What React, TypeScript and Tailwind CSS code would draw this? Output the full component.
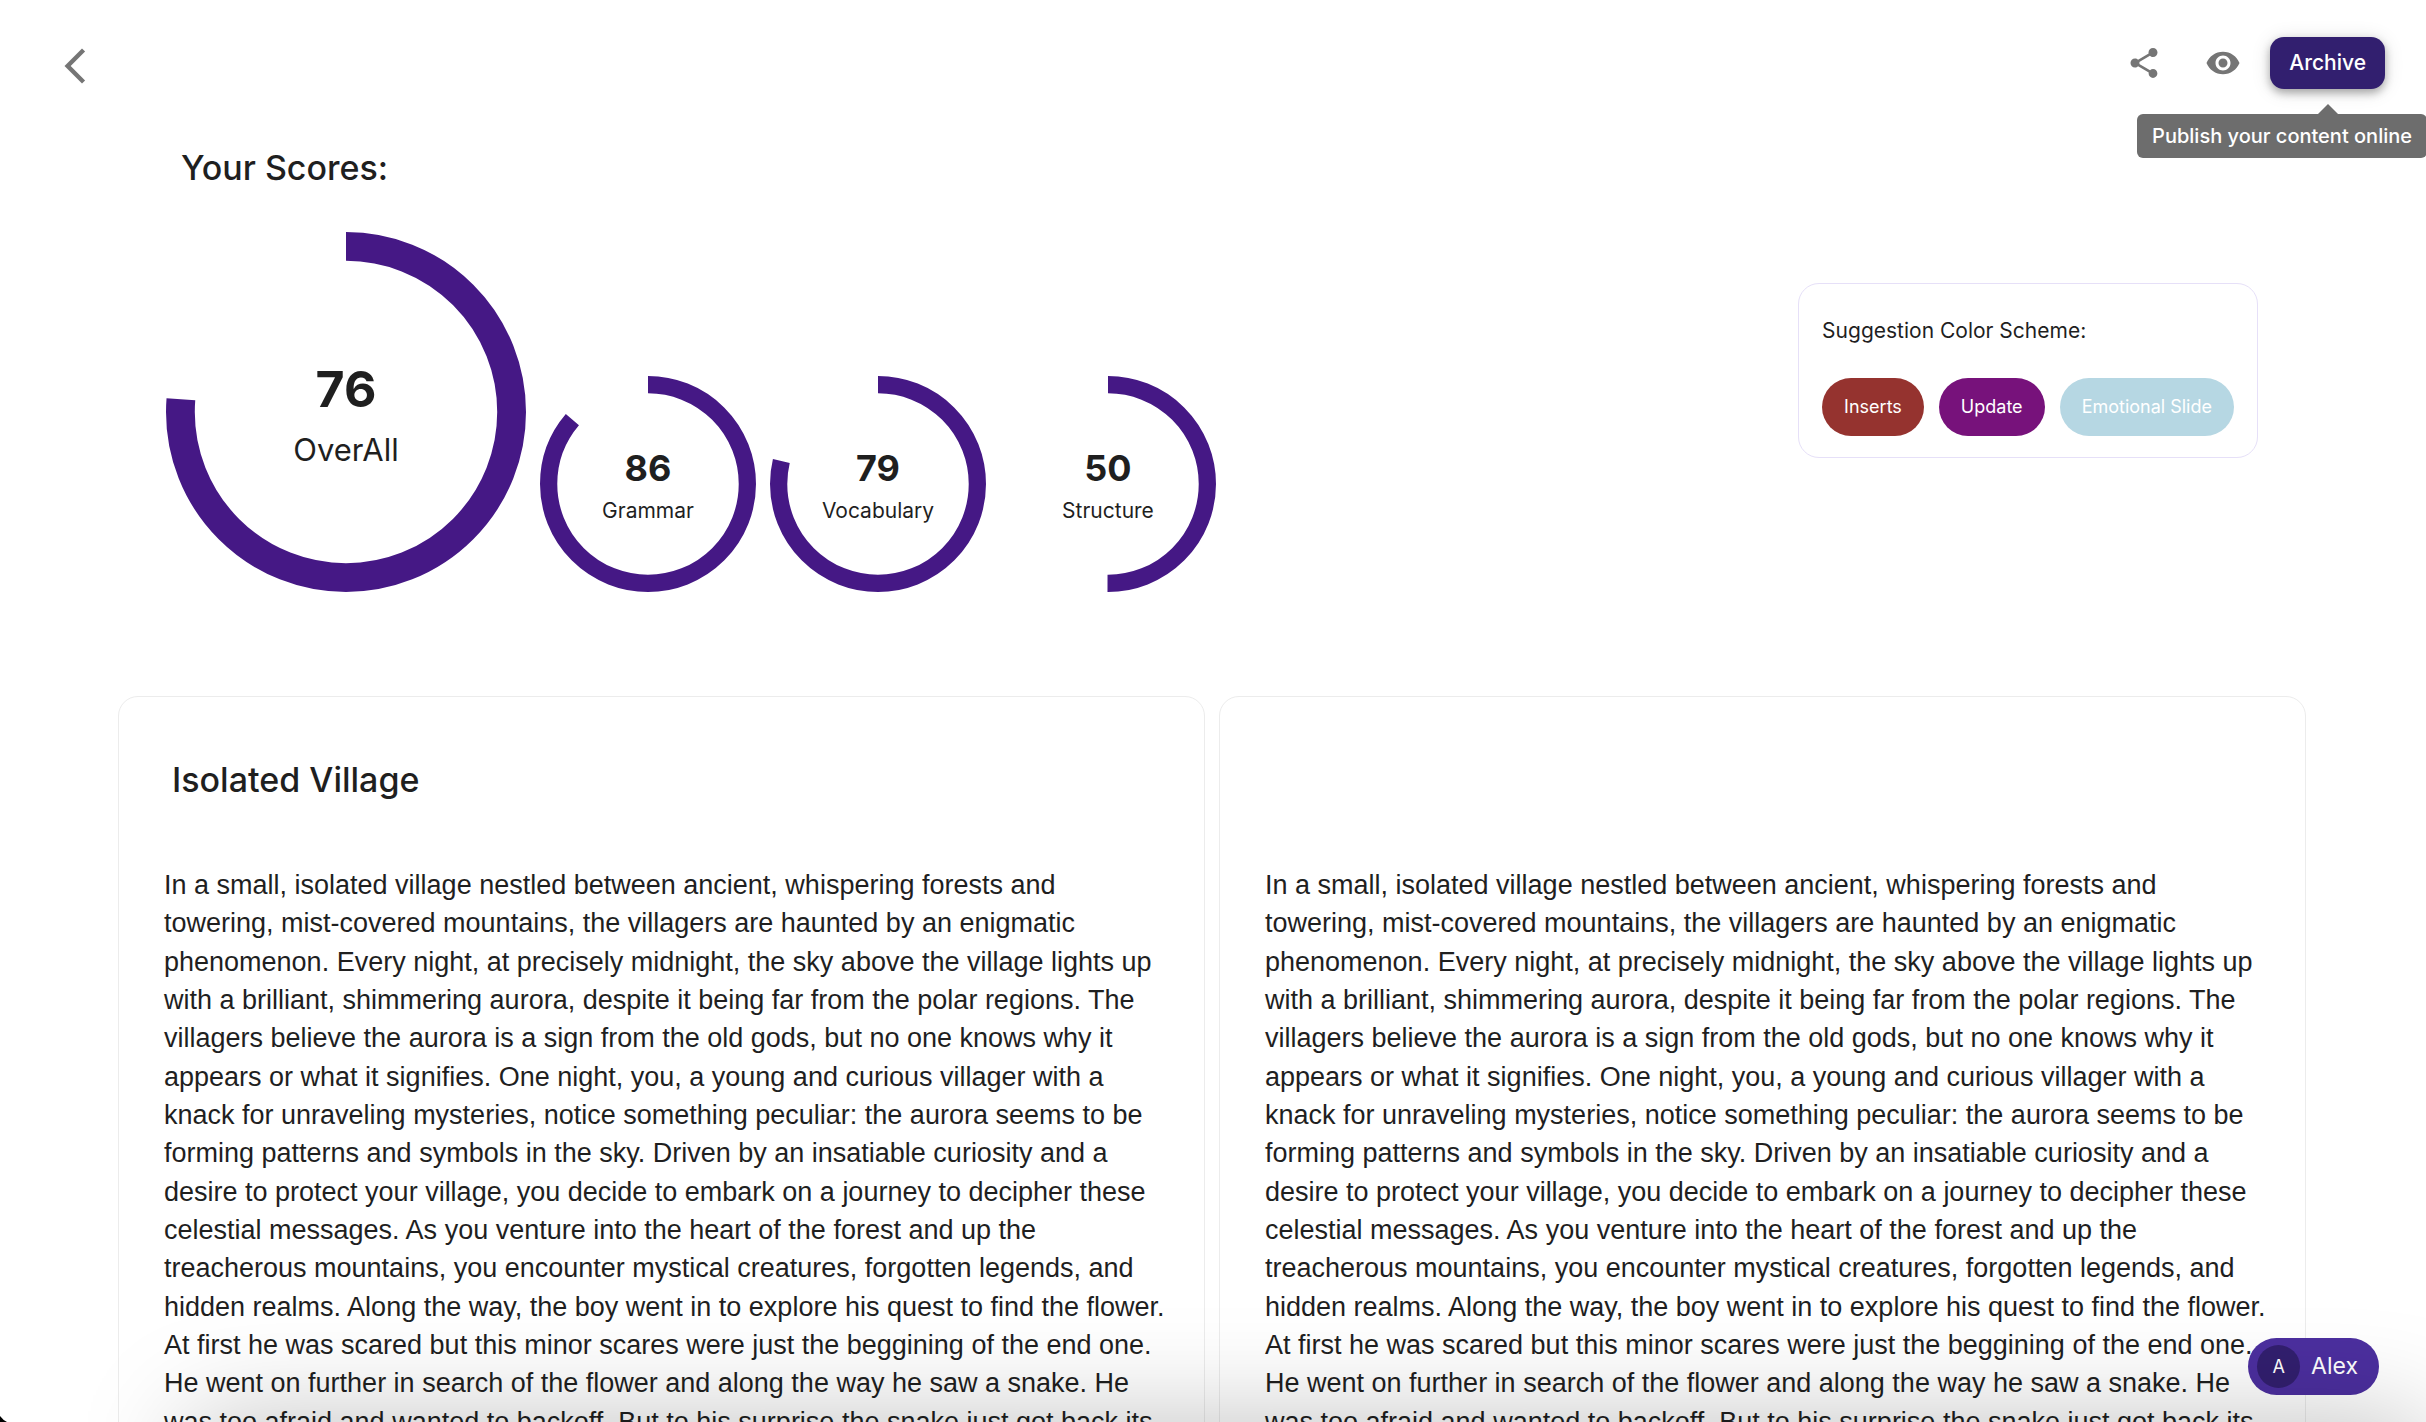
import React from "react";

const STORY =
  "In a small, isolated village nestled between ancient, whispering forests and towering, mist-covered mountains, the villagers are haunted by an enigmatic phenomenon. Every night, at precisely midnight, the sky above the village lights up with a brilliant, shimmering aurora, despite it being far from the polar regions. The villagers believe the aurora is a sign from the old gods, but no one knows why it appears or what it signifies. One night, you, a young and curious villager with a knack for unraveling mysteries, notice something peculiar: the aurora seems to be forming patterns and symbols in the sky. Driven by an insatiable curiosity and a desire to protect your village, you decide to embark on a journey to decipher these celestial messages. As you venture into the heart of the forest and up the treacherous mountains, you encounter mystical creatures, forgotten legends, and hidden realms. Along the way, the boy went in to explore his quest to find the flower. At first he was scared but this minor scares were just the beggining of the end one. He went on further in search of the flower and along the way he saw a snake. He was too afraid and wanted to backoff. But to his surprise the snake just got back its";

function Icon({ d, className }: { d: string; className: string }) {
  return (
    <svg viewBox="0 0 24 24" fill="currentColor" className={className} aria-hidden="true">
      <path d={d} />
    </svg>
  );
}

const BACK = "M17.77 3.77 16 2 6 12l10 10 1.77-1.77L9.54 12z";
const SHARE =
  "M18 16.08c-.76 0-1.44.3-1.96.77L8.91 12.7c.05-.23.09-.46.09-.7s-.04-.47-.09-.7l7.05-4.11c.54.5 1.25.81 2.04.81 1.66 0 3-1.34 3-3s-1.34-3-3-3-3 1.34-3 3c0 .24.04.47.09.7L8.04 9.81C7.5 9.31 6.79 9 6 9c-1.66 0-3 1.34-3 3s1.34 3 3 3c.79 0 1.5-.31 2.04-.81l7.12 4.16c-.05.21-.08.43-.08.65 0 1.61 1.31 2.92 2.92 2.92 1.61 0 2.92-1.31 2.92-2.92s-1.31-2.92-2.92-2.92z";
const EYE =
  "M12 4.5C7 4.5 2.73 7.61 1 12c1.73 4.39 6 7.5 11 7.5s9.27-3.11 11-7.5c-1.73-4.39-6-7.5-11-7.5zM12 17c-2.76 0-5-2.24-5-5s2.24-5 5-5 5 2.24 5 5-2.24 5-5 5zm0-8c-1.66 0-3 1.34-3 3s1.34 3 3 3 3-1.34 3-3-1.34-3-3-3z";

type ScoreProps = { value: number; exact: number; label: string; large?: boolean };

function Score({ value, exact, label, large = false }: ScoreProps) {
  const radius = 46;
  const length = 2 * Math.PI * radius;
  return (
    <div className={large ? "grid size-[360px]" : "grid size-[216px]"}>
      <svg viewBox="0 0 100 100" className="col-start-1 row-start-1 size-full -rotate-90" aria-hidden="true">
        <circle
          cx="50"
          cy="50"
          r={radius}
          fill="none"
          stroke="#451885"
          strokeWidth="8"
          strokeDasharray={`${(length * exact) / 100} ${length}`}
        />
      </svg>
      <div className="col-start-1 row-start-1 flex flex-col items-center justify-center pt-1">
        <span className={large ? "text-[50px] leading-[72px] font-bold" : "text-[36px] leading-[50px] font-bold"}>
          {value}
        </span>
        <span className={large ? "text-[31px] leading-[50px]" : "text-[21px] leading-[36px]"}>{label}</span>
      </div>
    </div>
  );
}

function StoryCard({ title, label }: { title?: string; label: string }) {
  return (
    <article
      aria-label={label}
      className="min-w-0 flex-1 rounded-[20px] border border-[#ececec] pt-14 pr-8 pl-[45px]"
    >
      <h2 className="h-[54px] px-2 text-[34px] leading-[54px] font-medium">{title}</h2>
      <p className="mt-[59px] font-['Liberation_Sans',Arial,sans-serif] text-[27px] leading-[1.42]">{STORY}</p>
    </article>
  );
}

export default function App() {
  return (
    <div className="relative h-screen overflow-hidden bg-white font-[Inter,sans-serif] text-[#1f1f1f]">
      <header className="flex h-[126px] items-start justify-between pt-[37px] pr-[41px] pl-[46px]">
        <button type="button" aria-label="Back" className="p-2 text-[#757575]">
          <Icon d={BACK} className="size-[42px]" />
        </button>
        <div className="flex items-center">
          <button type="button" aria-label="Share" className="mr-[43px] text-[#757575]">
            <Icon d={SHARE} className="size-9" />
          </button>
          <button type="button" aria-label="Preview" className="mr-[29px] text-[#757575]">
            <Icon d={EYE} className="size-9" />
          </button>
          <div className="relative">
            <button
              type="button"
              aria-describedby="archive-tip"
              className="h-[52px] rounded-[14px] bg-[#321f6f] px-[19px] text-[21px] font-medium text-white shadow-[0_4px_8px_rgba(0,0,0,0.3),0_2px_20px_rgba(0,0,0,0.12)]"
            >
              Archive
            </button>
            <div
              id="archive-tip"
              role="tooltip"
              className="absolute top-[77px] -right-[42px] rounded-[6px] bg-[#6d6d6d] px-[15px] text-[20px] leading-[44px] font-medium whitespace-nowrap text-white"
            >
              <svg viewBox="0 0 20 10" className="absolute right-[89px] bottom-full h-[10px] w-5" aria-hidden="true">
                <path d="M0 10 10 0l10 10z" fill="#6d6d6d" />
              </svg>
              Publish your content online
            </div>
          </div>
        </div>
      </header>

      <main className="mr-[120px] ml-[118px]">
        <section className="flex h-[570px] justify-between px-12">
          <div>
            <h1 className="pt-[15px] pl-[15px] text-[34px] leading-[54px] font-medium">Your Scores:</h1>
            <div className="mt-[37px] flex items-end gap-[14px]">
              <Score value={76} exact={76.2} label="OverAll" large />
              <Score value={86} exact={86.1} label="Grammar" />
              <Score value={79} exact={78.6} label="Vocabulary" />
              <Score value={50} exact={50} label="Structure" />
            </div>
          </div>
          <aside className="mt-[157px] h-[175px] rounded-[21px] border border-[#e6e0f8] px-[23px] pt-[31px]">
            <p className="text-[21px] leading-8">Suggestion Color Scheme:</p>
            <ul className="mt-[31px] flex gap-[15px] text-[18px] leading-[58px] text-white">
              <li className="rounded-[29px] bg-[#95332f] px-[22px]">Inserts</li>
              <li className="rounded-[29px] bg-[#77127b] px-[22px]">Update</li>
              <li className="rounded-[29px] bg-[#b6d7e3] px-[22px]">Emotional Slide</li>
            </ul>
          </aside>
        </section>

        <section className="flex gap-[14px]">
          <StoryCard title="Isolated Village" label="Original story" />
          <StoryCard label="Suggested story" />
        </section>
      </main>

      <button
        type="button"
        className="absolute right-[47px] bottom-[27px] flex h-[57px] items-center gap-[11px] rounded-full bg-[#4c2f9f] pr-[21px] pl-[9px] text-[23px] text-white"
      >
        <span className="size-[43px] rounded-full bg-[#321f6f] text-center text-[18px] leading-[43px]">A</span>
        Alex
      </button>
      <div className="pointer-events-none absolute top-full right-0 left-[190px] h-40 shadow-[0_0_110px_rgba(0,0,0,0.25)]" />
      <svg viewBox="0 0 7 6" className="absolute bottom-0 left-0 h-[6px] w-[7px]" aria-hidden="true">
        <path d="M0 0Q3 4 7 6H0z" />
      </svg>
    </div>
  );
}
